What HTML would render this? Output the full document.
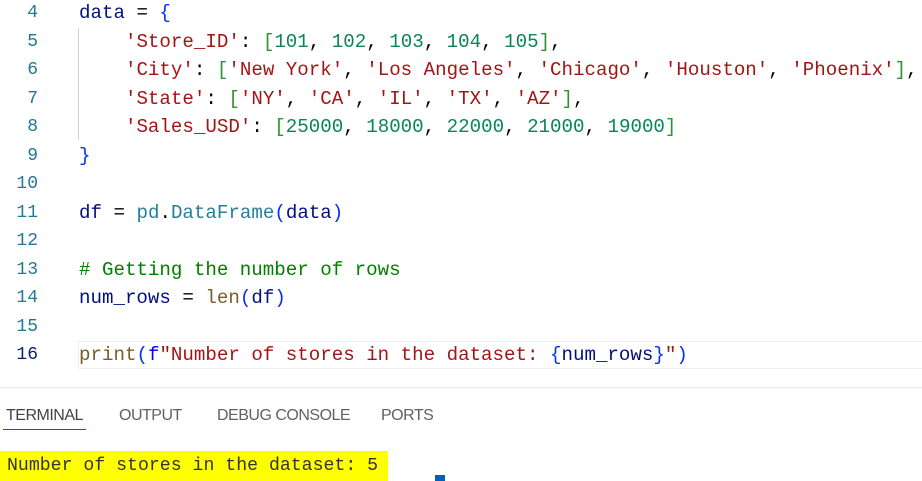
<!DOCTYPE html>
<html><head><style>
body{margin:0;width:922px;height:481px;background:#fff;overflow:hidden;position:relative;font-family:"Liberation Mono",monospace;}
.ln{position:absolute;left:0;width:38px;text-align:right;color:#237893;font-size:18px;}
.cd{position:absolute;left:79px;white-space:pre;font-size:19.15px;color:#000;}
.v{color:#001080}.s{color:#a31515}.n{color:#098658}.b{color:#0431fa}.g{color:#319331}.t{color:#267f99}.f{color:#795e26}.k{color:#0000ff}.c{color:#008000}
.tab{position:absolute;top:407px;font-family:"Liberation Sans",sans-serif;font-size:16px;color:#616161;letter-spacing:-0.5px}
</style></head><body>
<div style="position:absolute;left:78px;top:341px;width:850px;height:26px;border:1px solid #eeeeee;"></div>
<div style="position:absolute;left:78px;top:28px;width:1px;height:112px;background:#d0d0d0"></div>
<div class="ln" style="top:3px">4</div><div class="cd" style="top:2px"><span class="v">data</span> = <span class="b">{</span></div>
<div class="ln" style="top:32px">5</div><div class="cd" style="top:31px">    <span class="s">'Store_ID'</span>: <span class="g">[</span><span class="n">101</span>, <span class="n">102</span>, <span class="n">103</span>, <span class="n">104</span>, <span class="n">105</span><span class="g">]</span>,</div>
<div class="ln" style="top:60px">6</div><div class="cd" style="top:59px">    <span class="s">'City'</span>: <span class="g">[</span><span class="s">'New York'</span>, <span class="s">'Los Angeles'</span>, <span class="s">'Chicago'</span>, <span class="s">'Houston'</span>, <span class="s">'Phoenix'</span><span class="g">]</span>,</div>
<div class="ln" style="top:89px">7</div><div class="cd" style="top:88px">    <span class="s">'State'</span>: <span class="g">[</span><span class="s">'NY'</span>, <span class="s">'CA'</span>, <span class="s">'IL'</span>, <span class="s">'TX'</span>, <span class="s">'AZ'</span><span class="g">]</span>,</div>
<div class="ln" style="top:117px">8</div><div class="cd" style="top:116px">    <span class="s">'Sales_USD'</span>: <span class="g">[</span><span class="n">25000</span>, <span class="n">18000</span>, <span class="n">22000</span>, <span class="n">21000</span>, <span class="n">19000</span><span class="g">]</span></div>
<div class="ln" style="top:146px">9</div><div class="cd" style="top:145px"><span class="b">}</span></div>
<div class="ln" style="top:174px">10</div>
<div class="ln" style="top:203px">11</div><div class="cd" style="top:202px"><span class="v">df</span> = <span class="t">pd</span>.<span class="t">DataFrame</span><span class="b">(</span><span class="v">data</span><span class="b">)</span></div>
<div class="ln" style="top:231px">12</div>
<div class="ln" style="top:260px">13</div><div class="cd" style="top:259px"><span class="c"># Getting the number of rows</span></div>
<div class="ln" style="top:288px">14</div><div class="cd" style="top:287px"><span class="v">num_rows</span> = <span class="f">len</span><span class="b">(</span><span class="v">df</span><span class="b">)</span></div>
<div class="ln" style="top:317px">15</div>
<div class="ln" style="top:345px;color:#0b216f">16</div><div class="cd" style="top:344px"><span class="f">print</span><span class="b">(</span><span class="k">f</span><span class="s">"Number of stores in the dataset: </span><span class="b">{</span><span class="v">num_rows</span><span class="b">}</span><span class="s">"</span><span class="b">)</span></div>
<div style="position:absolute;left:0;top:387px;width:922px;height:1px;background:#e8e8e8"></div>
<div class="tab" style="left:6px;color:#424242">TERMINAL</div>
<div style="position:absolute;left:3px;top:429px;width:83px;height:1px;background:#005fb8"></div>
<div class="tab" style="left:119px">OUTPUT</div>
<div class="tab" style="left:217px">DEBUG CONSOLE</div>
<div class="tab" style="left:381px">PORTS</div>
<div style="position:absolute;left:0;top:451px;width:388px;height:30px;background:#ffff00"></div>
<div style="position:absolute;left:7px;top:456px;white-space:pre;font-size:18.2px;color:#333">Number of stores in the dataset: 5</div>
<div style="position:absolute;left:435px;top:475px;width:10px;height:6px;background:#005fb8"></div>
</body></html>
